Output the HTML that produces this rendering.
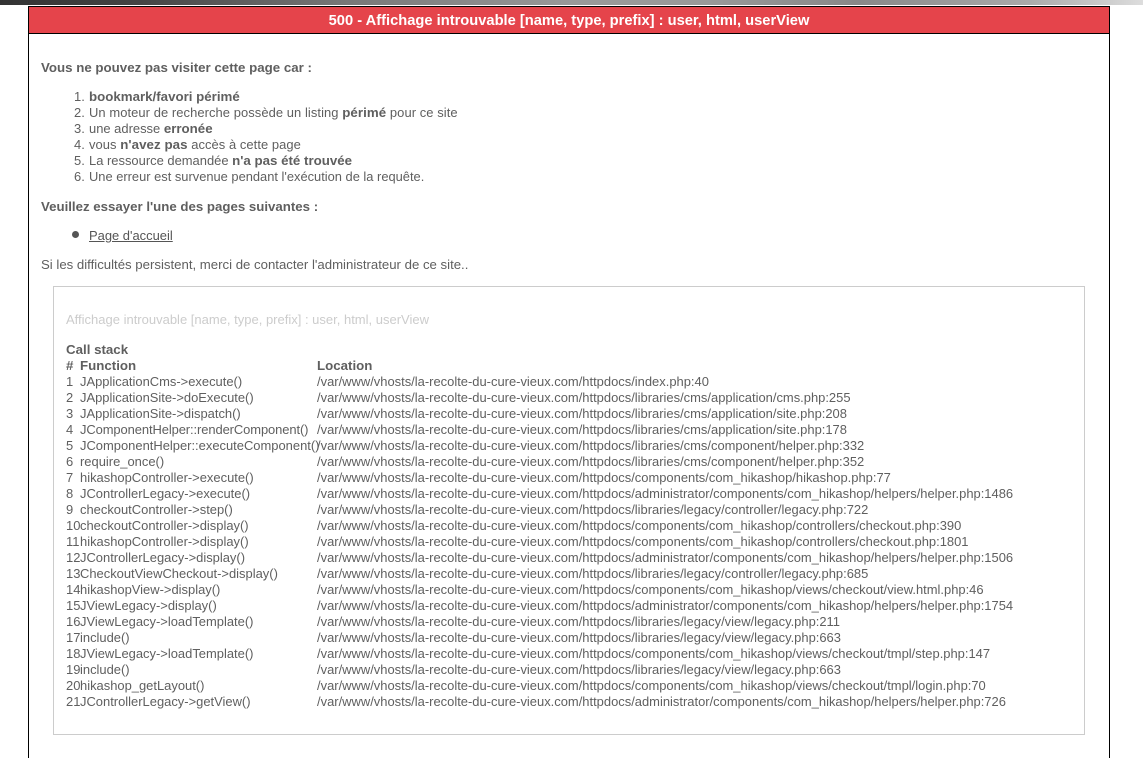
<!DOCTYPE html>
<html lang="fr"><head><meta charset="utf-8"><title>500</title>
<style>
html,body{margin:0;padding:0;background:#fff;width:1143px;height:758px;overflow:hidden}
body{position:relative;font:12.95px/16px "Liberation Sans",sans-serif;color:#5f5f5f}
.a{position:absolute;white-space:nowrap}
#top{position:absolute;left:0;top:0;width:1143px;height:5px;background:linear-gradient(90deg,#333 0,#444 12%,#777 30%,#999 50%,#999 62%,#888 75%,#aaa 90%,#ddd 100%)}
#box{position:absolute;left:28px;top:6px;width:1080px;height:760px;border:1px solid #000;background:#fff}
#hd{position:absolute;left:29px;top:7px;width:1080px;height:26px;background:#e5444b;border-bottom:1px solid #000;color:#fff;font-weight:bold;font-size:14.7px;line-height:28px;text-align:center}
#tr{position:absolute;left:53px;top:286px;width:1030px;height:447px;border:1px solid #ccc}
b{font-weight:bold;font-size:13.3px}
a{color:#555;text-decoration:underline}
</style></head><body>
<div id="top"></div>
<div id="box"></div>
<div id="hd">500 - Affichage introuvable [name, type, prefix] : user, html, userView</div>
<div class="a" style="left:41px;top:60px"><b>Vous ne pouvez pas visiter cette page car :</b></div>
<div class="a" style="left:74px;top:89px">1.</div><div class="a" style="left:89px;top:89px"><b>bookmark/favori périmé</b></div>
<div class="a" style="left:74px;top:105px">2.</div><div class="a" style="left:89px;top:105px;letter-spacing:.07px">Un moteur de recherche possède un listing <b>périmé</b> pour ce site</div>
<div class="a" style="left:74px;top:121px">3.</div><div class="a" style="left:89px;top:121px">une adresse <b>erronée</b></div>
<div class="a" style="left:74px;top:137px">4.</div><div class="a" style="left:89px;top:137px;letter-spacing:.06px">vous <b>n'avez pas</b> accès à cette page</div>
<div class="a" style="left:74px;top:153px">5.</div><div class="a" style="left:89px;top:153px">La ressource demandée <b>n'a pas été trouvée</b></div>
<div class="a" style="left:74px;top:169px">6.</div><div class="a" style="left:89px;top:169px;font-size:12.88px">Une erreur est survenue pendant l'exécution de la requête.</div>
<div class="a" style="left:41px;top:199px"><b style="font-size:13.25px">Veuillez essayer l'une des pages suivantes :</b></div>
<div class="a" style="left:72px;top:231px;width:7px;height:7px;border-radius:50%;background:#555"></div>
<div class="a" style="left:89px;top:228px"><a href="#">Page d'accueil</a></div>
<div class="a" style="left:41px;top:257px;font-size:13.2px">Si les difficultés persistent, merci de contacter l'administrateur de ce site..</div>
<div id="tr"></div>
<div class="a" style="left:66px;top:312px;color:#ccc;font-size:13px">Affichage introuvable [name, type, prefix] : user, html, userView</div>
<div class="a" style="left:66px;top:342px"><b>Call stack</b></div>
<div class="a" style="left:66px;top:358px"><b>#</b></div>
<div class="a" style="left:80px;top:358px"><b>Function</b></div>
<div class="a" style="left:317px;top:358px"><b>Location</b></div>
<div class="a" style="left:66px;top:374px">1</div><div class="a" style="left:80px;top:374px">JApplicationCms-&gt;execute()</div><div class="a" style="left:317px;top:374px">/var/www/vhosts/la-recolte-du-cure-vieux.com/httpdocs/index.php:40</div>
<div class="a" style="left:66px;top:390px">2</div><div class="a" style="left:80px;top:390px">JApplicationSite-&gt;doExecute()</div><div class="a" style="left:317px;top:390px">/var/www/vhosts/la-recolte-du-cure-vieux.com/httpdocs/libraries/cms/application/cms.php:255</div>
<div class="a" style="left:66px;top:406px">3</div><div class="a" style="left:80px;top:406px">JApplicationSite-&gt;dispatch()</div><div class="a" style="left:317px;top:406px">/var/www/vhosts/la-recolte-du-cure-vieux.com/httpdocs/libraries/cms/application/site.php:208</div>
<div class="a" style="left:66px;top:422px">4</div><div class="a" style="left:80px;top:422px;letter-spacing:-.09px">JComponentHelper::renderComponent()</div><div class="a" style="left:317px;top:422px">/var/www/vhosts/la-recolte-du-cure-vieux.com/httpdocs/libraries/cms/application/site.php:178</div>
<div class="a" style="left:66px;top:438px">5</div><div class="a" style="left:80px;top:438px">JComponentHelper::executeComponent()</div><div class="a" style="left:317px;top:438px">/var/www/vhosts/la-recolte-du-cure-vieux.com/httpdocs/libraries/cms/component/helper.php:332</div>
<div class="a" style="left:66px;top:454px">6</div><div class="a" style="left:80px;top:454px">require_once()</div><div class="a" style="left:317px;top:454px">/var/www/vhosts/la-recolte-du-cure-vieux.com/httpdocs/libraries/cms/component/helper.php:352</div>
<div class="a" style="left:66px;top:470px">7</div><div class="a" style="left:80px;top:470px">hikashopController-&gt;execute()</div><div class="a" style="left:317px;top:470px">/var/www/vhosts/la-recolte-du-cure-vieux.com/httpdocs/components/com_hikashop/hikashop.php:77</div>
<div class="a" style="left:66px;top:486px">8</div><div class="a" style="left:80px;top:486px">JControllerLegacy-&gt;execute()</div><div class="a" style="left:317px;top:486px">/var/www/vhosts/la-recolte-du-cure-vieux.com/httpdocs/administrator/components/com_hikashop/helpers/helper.php:1486</div>
<div class="a" style="left:66px;top:502px">9</div><div class="a" style="left:80px;top:502px">checkoutController-&gt;step()</div><div class="a" style="left:317px;top:502px">/var/www/vhosts/la-recolte-du-cure-vieux.com/httpdocs/libraries/legacy/controller/legacy.php:722</div>
<div class="a" style="left:66px;top:518px">10</div><div class="a" style="left:80px;top:518px">checkoutController-&gt;display()</div><div class="a" style="left:317px;top:518px">/var/www/vhosts/la-recolte-du-cure-vieux.com/httpdocs/components/com_hikashop/controllers/checkout.php:390</div>
<div class="a" style="left:66px;top:534px">11</div><div class="a" style="left:80px;top:534px">hikashopController-&gt;display()</div><div class="a" style="left:317px;top:534px">/var/www/vhosts/la-recolte-du-cure-vieux.com/httpdocs/components/com_hikashop/controllers/checkout.php:1801</div>
<div class="a" style="left:66px;top:550px">12</div><div class="a" style="left:80px;top:550px">JControllerLegacy-&gt;display()</div><div class="a" style="left:317px;top:550px">/var/www/vhosts/la-recolte-du-cure-vieux.com/httpdocs/administrator/components/com_hikashop/helpers/helper.php:1506</div>
<div class="a" style="left:66px;top:566px">13</div><div class="a" style="left:80px;top:566px">CheckoutViewCheckout-&gt;display()</div><div class="a" style="left:317px;top:566px">/var/www/vhosts/la-recolte-du-cure-vieux.com/httpdocs/libraries/legacy/controller/legacy.php:685</div>
<div class="a" style="left:66px;top:582px">14</div><div class="a" style="left:80px;top:582px">hikashopView-&gt;display()</div><div class="a" style="left:317px;top:582px">/var/www/vhosts/la-recolte-du-cure-vieux.com/httpdocs/components/com_hikashop/views/checkout/view.html.php:46</div>
<div class="a" style="left:66px;top:598px">15</div><div class="a" style="left:80px;top:598px">JViewLegacy-&gt;display()</div><div class="a" style="left:317px;top:598px">/var/www/vhosts/la-recolte-du-cure-vieux.com/httpdocs/administrator/components/com_hikashop/helpers/helper.php:1754</div>
<div class="a" style="left:66px;top:614px">16</div><div class="a" style="left:80px;top:614px">JViewLegacy-&gt;loadTemplate()</div><div class="a" style="left:317px;top:614px">/var/www/vhosts/la-recolte-du-cure-vieux.com/httpdocs/libraries/legacy/view/legacy.php:211</div>
<div class="a" style="left:66px;top:630px">17</div><div class="a" style="left:80px;top:630px">include()</div><div class="a" style="left:317px;top:630px">/var/www/vhosts/la-recolte-du-cure-vieux.com/httpdocs/libraries/legacy/view/legacy.php:663</div>
<div class="a" style="left:66px;top:646px">18</div><div class="a" style="left:80px;top:646px">JViewLegacy-&gt;loadTemplate()</div><div class="a" style="left:317px;top:646px">/var/www/vhosts/la-recolte-du-cure-vieux.com/httpdocs/components/com_hikashop/views/checkout/tmpl/step.php:147</div>
<div class="a" style="left:66px;top:662px">19</div><div class="a" style="left:80px;top:662px">include()</div><div class="a" style="left:317px;top:662px">/var/www/vhosts/la-recolte-du-cure-vieux.com/httpdocs/libraries/legacy/view/legacy.php:663</div>
<div class="a" style="left:66px;top:678px">20</div><div class="a" style="left:80px;top:678px">hikashop_getLayout()</div><div class="a" style="left:317px;top:678px">/var/www/vhosts/la-recolte-du-cure-vieux.com/httpdocs/components/com_hikashop/views/checkout/tmpl/login.php:70</div>
<div class="a" style="left:66px;top:694px">21</div><div class="a" style="left:80px;top:694px">JControllerLegacy-&gt;getView()</div><div class="a" style="left:317px;top:694px">/var/www/vhosts/la-recolte-du-cure-vieux.com/httpdocs/administrator/components/com_hikashop/helpers/helper.php:726</div>
</body></html>
